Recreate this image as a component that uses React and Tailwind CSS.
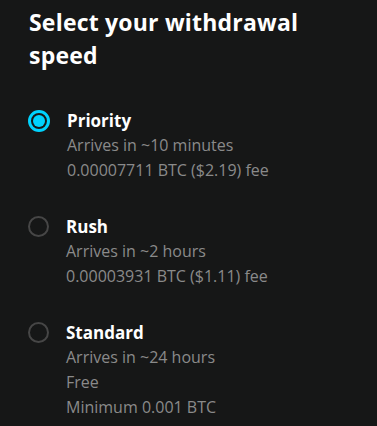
import React from "react";

const options = [
  {
    id: "priority",
    title: "Priority",
    lines: ["Arrives in ~10 minutes", "0.00007711 BTC ($2.19) fee"],
  },
  {
    id: "rush",
    title: "Rush",
    lines: ["Arrives in ~2 hours", "0.00003931 BTC ($1.11) fee"],
  },
  {
    id: "standard",
    title: "Standard",
    lines: ["Arrives in ~24 hours", "Free", "Minimum 0.001 BTC"],
  },
];

const Radio = ({ checked }) =>
  checked ? (
    <div className="w-[22px] h-[22px] rounded-full border-[3px] border-[#00d2fd] flex items-center justify-center">
      <div className="w-[12px] h-[12px] rounded-full bg-[#00d2fd]" />
    </div>
  ) : (
    <div className="w-[21px] h-[21px] rounded-full border-[2.5px] border-[#464646]" />
  );

export default function App() {
  const selected = "priority";
  return (
    <div
      className="w-[377px] h-[426px] overflow-hidden bg-[#161717] text-white"
      style={{ fontFamily: "'Open Sans', 'Noto Sans', sans-serif" }}
    >
      <h1 className="pl-[29px] pt-[6px] text-[23px] leading-[33px] font-bold tracking-[0.2px]">
        Select your withdrawal
        <br />
        speed
      </h1>
      <div className="mt-[37px] flex flex-col gap-[32px]">
        {options.map((o) => (
          <div key={o.id} className="flex gap-[17px] pl-[28px]">
            <div className="pt-[1px]">
              <Radio checked={o.id === selected} />
            </div>
            <div className="flex flex-col">
              <span className="text-[17px] leading-[24px] font-bold">{o.title}</span>
              {o.lines.map((l) => (
                <span key={l} className="text-[16px] leading-[25px] text-[#8a8a8a]">
                  {l}
                </span>
              ))}
            </div>
          </div>
        ))}
      </div>
    </div>
  );
}
